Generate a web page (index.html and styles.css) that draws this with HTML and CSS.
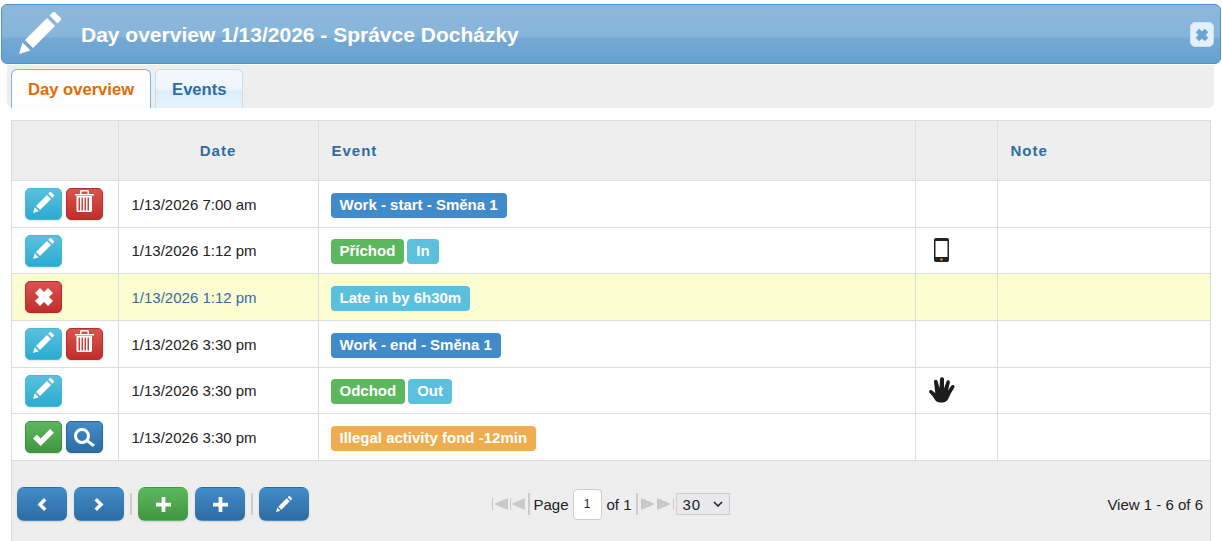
FILE: index.html
```html
<!DOCTYPE html>
<html lang="en">
<head>
<meta charset="utf-8">
<title>Day overview</title>
<link rel="stylesheet" href="styles.css">
</head>
<body>
<svg class="defs" width="0" height="0" aria-hidden="true">
  <symbol id="pencil" viewBox="0 0 42 42">
    <path d="M0 42 L3.5 30.5 L11.5 38.5 Z"/>
    <path d="M6 28 L28 6 L36 14 L14 36 Z"/>
    <path d="M30.5 3.5 L34 0 Q35 -.6 36 .2 L41.8 6 Q42.6 7 42 8 L38.5 11.5 Z"/>
  </symbol>
  <symbol id="times" viewBox="0 0 20 20">
    <path d="M6 1 L10 5 L14 1 L19 6 L15 10 L19 14 L14 19 L10 15 L6 19 L1 14 L5 10 L1 6 Z"/>
  </symbol>
  <symbol id="trash" viewBox="0 0 19 22">
    <path fill-rule="evenodd" d="M5 4 V1.500 Q5 0 6.500 0 H12.500 Q14 0 14 1.500 V4 H19 V5.500 H0 V4 Z M6.500 4 H12.500 V1.500 H6.500 Z"/>
    <path fill-rule="evenodd" d="M1.500 6 H17 V20.500 Q17 22 15.500 22 H3 Q1.500 22 1.500 20.500 Z M3.500 7.500 V20.500 H5 V7.500 Z M6.500 7.500 V20.500 H8 V7.500 Z M9.500 7.500 V20.500 H11 V7.500 Z M12.500 7.500 V20.500 H14 V7.500 Z"/>
  </symbol>
  <symbol id="check" viewBox="0 0 22 18">
    <path d="M0 10 L4 6 L8 10 L18 0 L22 4 L8 18 Z"/>
  </symbol>
  <symbol id="search" viewBox="0 0 21 19">
    <path fill-rule="evenodd" d="M8 0 A8 8 0 1 1 8 16 A8 8 0 1 1 8 0 Z M8 3 A5 5 0 1 0 8 13 A5 5 0 1 0 8 3 Z"/>
    <path d="M12.500 14 L14.500 12 L21 16.800 L19 19 Z"/>
  </symbol>
  <symbol id="plus" viewBox="0 0 16 16">
    <path d="M6 0 H10 V6 H16 V10 H10 V16 H6 V10 H0 V6 H6 Z"/>
  </symbol>
  <symbol id="left" viewBox="0 0 11 16">
    <path d="M8 0 L11 3 L6 8 L11 13 L8 16 L0 8 Z"/>
  </symbol>
  <symbol id="right" viewBox="0 0 11 16">
    <path d="M3 0 L0 3 L5 8 L0 13 L3 16 L11 8 Z"/>
  </symbol>
</svg>

<main class="dialog">
  <header class="titlebar">
    <svg class="title-icon"><use href="#pencil"/></svg>
    <h1 class="title">Day overview 1/13/2026 - Správce Docházky</h1>
    <button class="close" type="button" aria-label="Close"><svg class="close-icon"><use href="#times"/></svg></button>
  </header>

  <nav class="tabs">
    <a class="tab tab-active">Day overview</a>
    <a class="tab">Events</a>
  </nav>

  <section class="grid-panel">
    <table class="grid">
      <colgroup>
        <col class="col-actions"><col class="col-date"><col class="col-event"><col class="col-device"><col class="col-note">
      </colgroup>
      <thead>
        <tr><th></th><th class="center">Date</th><th>Event</th><th></th><th>Note</th></tr>
      </thead>
      <tbody>
        <tr class="tall">
          <td class="actions"><button class="act info"><svg class="i-pencil"><use href="#pencil"/></svg></button><button class="act danger"><svg class="i-trash"><use href="#trash"/></svg></button></td>
          <td>1/13/2026 7:00 am</td>
          <td><span class="label primary">Work - start - Směna 1</span></td>
          <td></td><td></td>
        </tr>
        <tr>
          <td class="actions"><button class="act info"><svg class="i-pencil"><use href="#pencil"/></svg></button></td>
          <td>1/13/2026 1:12 pm</td>
          <td><span class="label success">Příchod</span><span class="label cyan">In</span></td>
          <td class="device">
            <svg class="phone" viewBox="0 0 15 24"><rect x="0" y="0" width="15" height="24" rx="2" fill="#222"/><rect x="1.500" y="3" width="12" height="16" fill="#fff"/><circle cx="7.500" cy="21.500" r="1.300" fill="#e8862a"/></svg>
          </td>
          <td></td>
        </tr>
        <tr class="warn tall">
          <td class="actions"><button class="act danger"><svg class="i-times"><use href="#times"/></svg></button></td>
          <td>1/13/2026 1:12 pm</td>
          <td><span class="label cyan">Late in by 6h30m</span></td>
          <td></td><td></td>
        </tr>
        <tr class="tall">
          <td class="actions"><button class="act info"><svg class="i-pencil"><use href="#pencil"/></svg></button><button class="act danger"><svg class="i-trash"><use href="#trash"/></svg></button></td>
          <td>1/13/2026 3:30 pm</td>
          <td><span class="label primary">Work - end - Směna 1</span></td>
          <td></td><td></td>
        </tr>
        <tr>
          <td class="actions"><button class="act info"><svg class="i-pencil"><use href="#pencil"/></svg></button></td>
          <td>1/13/2026 3:30 pm</td>
          <td><span class="label success">Odchod</span><span class="label cyan">Out</span></td>
          <td class="device">
            <svg class="hand" viewBox="0 0 26 26"><path fill="#1c1c1c" d="M9 25 C6.500 24.500 5 21 3.500 19 L.3 15.500 C-.5 14 1 12.500 2.500 13.300 L6.300 16 L5 5 C4.700 2.500 8 1.800 8.700 4.500 L10.500 11 L11 2 C11 -.5 15 -.5 15 2 L15 11.500 L17.500 4.500 C18.300 2.500 21.300 3.300 20.800 5.500 L19 13.500 L22.300 8.700 C23.500 7 26.300 8.400 25.300 10.500 L21.500 17 C20 20 19.500 22.500 17.500 24 C15 26 11.500 25.800 9 25 Z"/></svg>
          </td>
          <td></td>
        </tr>
        <tr class="tall">
          <td class="actions"><button class="act success-btn"><svg class="i-check"><use href="#check"/></svg></button><button class="act blue"><svg class="i-search"><use href="#search"/></svg></button></td>
          <td>1/13/2026 3:30 pm</td>
          <td><span class="label warning">Illegal activity fond -12min</span></td>
          <td></td><td></td>
        </tr>
      </tbody>
    </table>

    <footer class="pager-bar">
      <div class="tools">
        <button class="tool blue"><svg class="i-chev"><use href="#left"/></svg></button>
        <button class="tool blue"><svg class="i-chev"><use href="#right"/></svg></button>
        <span class="sep"></span>
        <button class="tool success-btn"><svg class="i-plus"><use href="#plus"/></svg></button>
        <button class="tool blue"><svg class="i-plus"><use href="#plus"/></svg></button>
        <span class="sep"></span>
        <button class="tool blue"><svg class="i-tool-pencil"><use href="#pencil"/></svg></button>
      </div>
      <div class="pager">
        <svg class="nav nav-prev" viewBox="0 0 33 12"><path d="M0 0h1v12H0z M2 6 L16 0 V12 Z M18 0h1v12h-1z M19 6 L33 0 V12 Z"/></svg>
        <span class="psep psep-a"></span>
        <span class="page-word">Page</span>
        <input class="page-input" value="1" aria-label="Page">
        <span class="page-of">of 1</span>
        <span class="psep psep-b"></span>
        <svg class="nav nav-next" viewBox="0 0 33 12"><path d="M0 0 L14 6 L0 12 Z M16 0 L30 6 L16 12 Z M32 0h1v12h-1z"/></svg>
        <span class="size">30<svg class="caret" viewBox="0 0 10 6"><path d="M1 1 L5 5 L9 1" fill="none" stroke="#222" stroke-width="1.600"/></svg></span>
      </div>
      <div class="view">View 1 - 6 of 6</div>
    </footer>
  </section>
</main>
</body>
</html>
```

FILE: styles.css
```css
* { box-sizing: border-box; }
html, body { margin: 0; padding: 0; }
body {
  background: #fff;
  font-family: "Liberation Sans", Arial, sans-serif;
  font-size: 15px;
  color: #222;
  height: 541px;
  overflow: hidden;
}
.defs { position: absolute; }
.dialog { padding: 4px 1px 0; }
.titlebar {
  display: flex;
  align-items: center;
  height: 60px;
  border: 1px solid #4d94cf;
  border-radius: 6px;
  padding-left: 17px;
  background: linear-gradient(#8cb8db 0, #87b5da 54%, #74a9d4 58%, #66a1d0 100%);
  color: #fff;
}
.title-icon { width: 42px; height: 42px; fill: #fff; margin-top: -2px; flex: none; }
.title {
  margin: 1px 0 0 20px;
  font-size: 21px;
  font-weight: 700;
  flex: 1;
  line-height: 1;
}
.close {
  width: 24px;
  height: 25px;
  margin: 1px 6px 0 0;
  padding: 0;
  border: 1px solid #cfe3f3;
  border-radius: 5px;
  background: #e3effa;
  display: flex;
  align-items: center;
  justify-content: center;
}
.close-icon { width: 14px; height: 14px; fill: #6ba4d1; }
.tabs {
  display: flex;
  gap: 4px;
  height: 43px;
  margin: 1px 7px 0 6px;
  padding: 4px 0 0 4px;
  background: #eee;
  border-radius: 0 0 6px 6px;
}
.tab {
  display: flex;
  align-items: center;
  justify-content: center;
  height: 39px;
  padding: 1px 16px 0;
  border: 1px solid #c5dff2;
  border-bottom: 0;
  border-radius: 6px 6px 0 0;
  background: linear-gradient(#f3f9fe 0, #edf6fd 50%, #ddeefb 56%, #e6f3fd 100%);
  color: #2e6da4;
  font-size: 16.6px;
  font-weight: 700;
}
.tab + .tab { padding-right: 15px; }
.tab-active {
  border-color: #79b4e4;
  background: linear-gradient(#fff, #fcfdff);
  color: #e46b00;
}
.grid-panel { margin: 12px 10px 0; border-left: 1px solid #ddd; border-right: 1px solid #ddd; background: #eee; height: 421px; }
.grid { width: 100%; border-collapse: collapse; table-layout: fixed; background: #fff; }
.col-actions { width: 106px; }
.col-date { width: 200px; }
.col-event { width: 597px; }
.col-device { width: 82px; }
.grid th, .grid td { border: 1px solid #ddd; padding: 0 13px; text-align: left; }
.grid tr > :first-child { border-left: 0; }
.grid tr > :last-child { border-right: 0; }
.grid th {
  height: 60px;
  background: #eee;
  color: #2e6da4;
  font-weight: 700;
  font-size: 15px;
  letter-spacing: 1px;
}
.grid th.center { text-align: center; }
.grid td { height: 46px; font-size: 15px; }
.grid tr.tall td { height: 47px; }
.grid .warn td { background: #fdfdd2; color: #2e6da4; }
.grid td.actions { padding: 0 0 0 13px; white-space: nowrap; font-size: 0; }
.grid td.device { padding: 0 0 0 13px; }
.act {
  display: inline-flex;
  align-items: center;
  justify-content: center;
  width: 37px;
  height: 32px;
  padding: 0;
  margin: 0 4px 0 0;
  border: 1px solid transparent;
  border-radius: 5px;
  vertical-align: middle;
  box-shadow: 0 1px 2px rgba(0,0,0,.12);
}
.act svg, .tool svg { fill: #fff; display: block; }
.info { background: linear-gradient(#5bc0de, #2aabd2); border-color: #46b8da; }
.danger { background: linear-gradient(#d9534f, #c12e2a); border-color: #b92c28; }
.blue { background: linear-gradient(#428bca, #2d6ca2); border-color: #2b669a; }
.success-btn { background: linear-gradient(#5cb85c, #419641); border-color: #3e8f3e; }
.i-pencil { width: 21px; height: 21px; margin-bottom: 4px; }
.i-trash { width: 19px; height: 22px; margin-bottom: 6px; }
.i-times { width: 20px; height: 20px; }
.i-check { width: 21px; height: 17px; }
.i-search { width: 21px; height: 19px; }
.label {
  display: inline-block;
  height: 25px;
  line-height: 24px;
  padding: 0 9px;
  margin: 2px 3px 0 0;
  border-radius: 4px;
  color: #fff;
  font-weight: 700;
  font-size: 15px;
  vertical-align: middle;
}
.label:first-child { margin-left: -1px; }
.primary { background: #428bca; }
.success { background: #5cb85c; }
.cyan { background: #5bc0de; }
.warning { background: #f0ad4e; }
.phone { width: 15px; height: 24px; display: block; margin: 0 0 2px 5px; }
.hand { width: 26px; height: 26px; display: block; margin-bottom: 2px; }
.pager-bar {
  display: grid;
  grid-template-columns: 1fr auto 1fr;
  align-items: center;
  height: 86px;
  padding: 0 6px 0 5px;
}
.tools { display: flex; align-items: center; gap: 7px; }
.tool {
  display: flex;
  align-items: center;
  justify-content: center;
  width: 50px;
  height: 34px;
  padding: 0;
  border: 1px solid transparent;
  border-radius: 7px;
  box-shadow: 0 1px 2px rgba(0,0,0,.12);
}
.sep { width: 2px; height: 22px; margin: 0 -1px; background: #ccc; }
.i-chev { width: 10px; height: 13px; }
.i-plus { width: 15px; height: 15px; }
.i-tool-pencil { width: 16px; height: 16px; }
.pager { display: flex; align-items: center; margin-left: 1px; font-size: 15px; color: #222; }
.nav { width: 33px; height: 12px; fill: #c9c9c9; flex: none; }
.psep { width: 2px; height: 22px; background: #ccc; flex: none; }
.psep-a { margin: 0 3px 0 3px; }
.psep-b { margin: 0 3px 0 4px; }
.page-word { margin-right: 4px; }
.page-of { margin-left: 5px; }
.page-input {
  width: 29px;
  height: 31px;
  border: 1px solid #ccc;
  border-radius: 4px;
  background: #fff;
  text-align: center;
  font: 12px "Liberation Sans", Arial, sans-serif;
  color: #222;
  padding: 0;
  margin: 0;
}
.size {
  display: flex;
  align-items: center;
  justify-content: space-between;
  width: 54px;
  height: 22px;
  margin-left: 2px;
  padding: 0 6px;
  border: 1px solid #ccc;
  background: #e9e9ed;
  letter-spacing: 1px;
}
.caret { width: 10px; height: 6px; }
.view { text-align: right; padding-right: 1px; }
```
